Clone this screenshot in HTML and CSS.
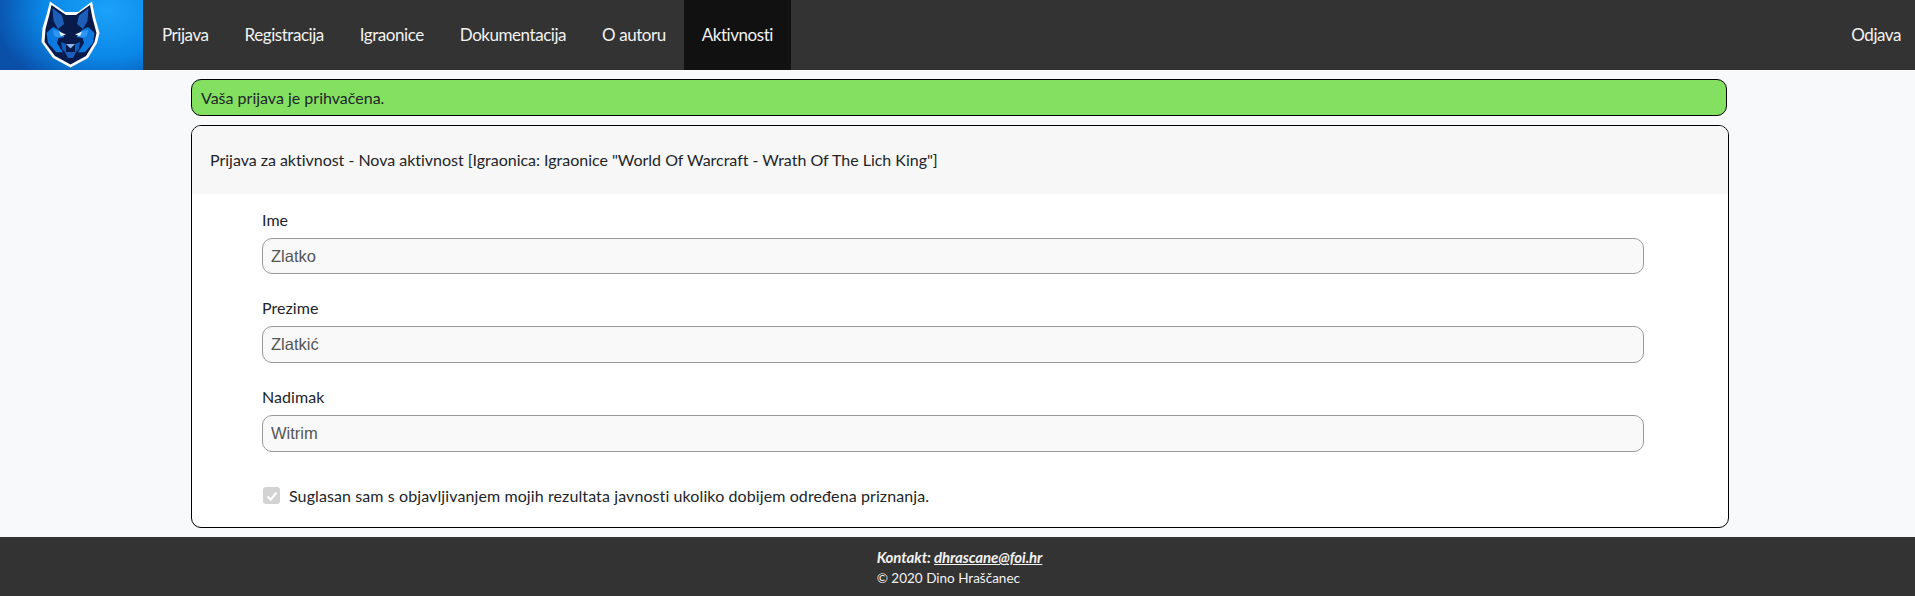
FILE: index.html
```html
<!DOCTYPE html>
<html lang="hr">
<head>
<meta charset="utf-8">
<title>Prijava za aktivnost</title>
<link rel="stylesheet" href="styles.css">
</head>
<body>
<header class="nav">
  <a class="logo" href="#">
    <svg class="wolf" width="143" height="70" viewBox="0 0 143 70" aria-hidden="true">
      <defs>
        <g id="half">
          <path fill="#1d5fb8" d="M52.5 8 L62 15.5 L64 24 L58 29 L53.5 21 Z"/>
          <path fill="#0d78dd" d="M46.5 33 L53 27 L59 30 L64.5 37 L58.5 38 L57 43 L63 52.5 L56 52 L48 43 Z"/>
          <path fill="#2f95f2" d="M53 30 L59 31 L64 36.5 L58 37.5 L54 36 Z"/>
          <path fill="#e8f6ff" d="M59 31.5 L66 34.5 L61 36 Z"/>
          <path fill="#0d5cc0" d="M61 42 L66 44 L66 53 L62 49 Z"/>
        </g>
      </defs>
      <path fill="#fff" d="M50 1.5 L65 12 L78 12 L92 1.5 L95 17 L99.5 33 L97 43 L88 58 L70.5 67.5 L53 58 L41.5 42 L42.5 28 L46.5 15 Z"/>
      <path fill="#071a4a" d="M51.5 5 L66 15 L76 15 L90 5 L92.5 18 L96.5 33 L94.5 42 L86 56 L70.5 64.5 L55 56 L44.5 42 L45.5 29 L49 16 Z"/>
      <use href="#half"/>
      <use href="#half" transform="translate(141,0) scale(-1,1)"/>
      <path fill="#8db8e6" d="M66 44 L75 44 L70.5 48.5 Z"/>
      <path fill="#1b5fbc" d="M65 52 L76 52 L73 58 L68 58 Z"/>
    </svg>
  </a>
  <nav class="menu">
    <a class="item" href="#">Prijava</a>
    <a class="item" href="#">Registracija</a>
    <a class="item" href="#">Igraonice</a>
    <a class="item" href="#">Dokumentacija</a>
    <a class="item" href="#">O autoru</a>
    <a class="item active" href="#">Aktivnosti</a>
  </nav>
  <a class="item logout" href="#">Odjava</a>
</header>
<main class="main">
  <div class="alert">Vaša prijava je prihvačena.</div>
  <section class="card">
    <h1 class="card-head">Prijava za aktivnost - Nova aktivnost [Igraonica: Igraonice "World Of Warcraft - Wrath Of The Lich King"]</h1>
    <form class="form">
      <div class="field">
        <label class="label" for="ime">Ime</label>
        <input class="input" id="ime" value="Zlatko" disabled>
      </div>
      <div class="field">
        <label class="label" for="prezime">Prezime</label>
        <input class="input tall" id="prezime" value="Zlatkić" disabled>
      </div>
      <div class="field">
        <label class="label" for="nadimak">Nadimak</label>
        <input class="input tall" id="nadimak" value="Witrim" disabled>
      </div>
      <div class="check">
        <span class="box">
          <svg width="12" height="12" viewBox="0 0 12 12" aria-hidden="true"><path d="M1.5 6.5 L4.6 9.6 L10.5 2.6" fill="none" stroke="#fff" stroke-width="2.2"/></svg>
        </span>
        <span class="check-text">Suglasan sam s objavljivanjem mojih rezultata javnosti ukoliko dobijem određena priznanja.</span>
      </div>
    </form>
  </section>
</main>
<footer class="footer">
  <div class="footer-inner">
    <div class="contact">Kontakt: <a href="#">dhrascane@foi.hr</a></div>
    <div class="copy">© 2020 Dino Hraščanec</div>
  </div>
</footer>
</body>
</html>
```
FILE: styles.css
```css
* { box-sizing: border-box; }
html, body { margin: 0; padding: 0; }
body {
  background: #f8f9fb;
  color: #212529;
  font-family: "Lato", "Noto Sans", sans-serif;
  font-size: 16px;
  width: 1915px;
  height: 596px;
  overflow: hidden;
}
.nav {
  display: flex;
  height: 70px;
  background: #333;
  align-items: stretch;
}
.logo {
  display: block;
  width: 143px;
  background: radial-gradient(ellipse 115px 85px at 75% 15%, #1ba2fa 0%, #0a88e8 55%, #0a4fa8 100%);
}
.wolf { display: block; }
.menu { display: flex; flex: 1; margin-left: 1px; }
.item {
  display: flex;
  align-items: center;
  padding: 0 18px 2px;
  color: #f2f2f2;
  text-decoration: none;
  font-size: 17px;
  letter-spacing: -0.45px;
}
.item.active { background: #111; }
.logout { padding-right: 14px; }
.main {
  width: 1538px;
  margin: 9px 0 0 191px;
}
.alert {
  width: 1536px;
  height: 37px;
  background: #84e060;
  border: 1px solid #000;
  border-radius: 10px;
  padding: 0 9px;
  display: flex;
  align-items: center;
}
.card {
  margin-top: 9px;
  height: 403px;
  background: #fff;
  border: 1px solid #000;
  border-radius: 10px;
  overflow: hidden;
}
.card-head {
  margin: 0;
  height: 68px;
  padding: 0 18px 2px;
  background: #f7f7f7;
  display: flex;
  align-items: center;
  font-size: 16px;
  font-weight: 400;
  letter-spacing: -0.02px;
}
.form {
  padding: 14px 0 0 70px;
  width: 1452px;
}
.field { margin-bottom: 22px; }
.label { display: block; height: 30px; line-height: 24px; letter-spacing: 0.05px; }
.input {
  display: block;
  width: 100%;
  height: 36px;
  padding: 0 8px;
  background: #f9f9f9;
  border: 1px solid #999;
  border-radius: 10px;
  color: #555;
  font-family: "Liberation Sans", Arial, sans-serif;
  font-size: 16.5px;
}
.input.tall { height: 37px; }
.check {
  display: flex;
  align-items: center;
  margin-top: 34px;
  padding-left: 1px;
}
.box {
  width: 17px;
  height: 17px;
  background: #d3d3d3;
  border-radius: 3px;
  margin-right: 9px;
  display: flex;
  align-items: center;
  justify-content: center;
}
.check-text { letter-spacing: 0.1px; }
.footer {
  margin-top: 9px;
  height: 59px;
  background: #333;
  color: #f2f2f2;
  display: flex;
  justify-content: center;
  padding: 10px 0 0 4px;
}
.contact { font-size: 15px; font-style: italic; font-weight: 700; line-height: 20px; letter-spacing: -0.1px; }
.contact a { color: inherit; }
.copy { font-size: 13.5px; line-height: 20px; margin-top: 1px; }
```
